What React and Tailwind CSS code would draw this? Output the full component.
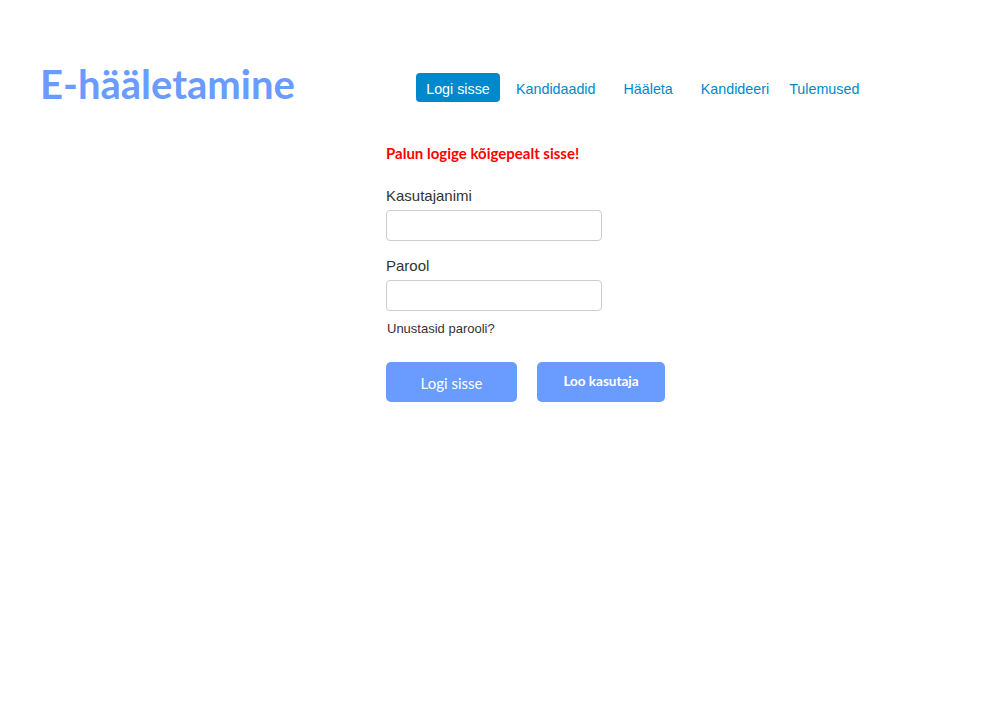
export default function App() {
  return (
    <div className="min-h-[717px] bg-white font-['Liberation_Sans',Arial,sans-serif]">
      {/* Header */}
      <div className="flex items-center pt-[64px]">
        <div className="w-[416px] pl-[40px]">
          <h1 className="font-['Lato',sans-serif] text-[40px] font-bold leading-[40px] text-[#6a9cff]">
            E-hääletamine
          </h1>
        </div>
        <nav className="mt-[6px] flex h-[29px] items-stretch text-[14.3px] leading-[29px]">
          <a className="block h-[29px] w-[84px] rounded-[4px] bg-[#0088cc] pt-[2px] text-center text-white">
            Logi sisse
          </a>
          <a className="ml-[16px] block pt-[2px] text-[#0088cc]">Kandidaadid</a>
          <a className="ml-[28px] block pt-[2px] text-[#0088cc]">Hääleta</a>
          <a className="ml-[28px] block pt-[2px] text-[#0088cc]">Kandideeri</a>
          <a className="ml-[20px] block pt-[2px] text-[#0088cc]">Tulemused</a>
        </nav>
      </div>

      {/* Login form */}
      <div className="pl-[386px] pt-[39px]">
        <p className="font-['Lato',sans-serif] text-[15px] font-bold leading-[20px] text-[#ff0000]">
          Palun logige kõigepealt sisse!
        </p>

        <label className="mt-[23px] block text-[15px] leading-[20px] text-[#333]">Kasutajanimi</label>
        <input className="mt-[4px] block h-[31px] w-[216px] rounded-[4px] border border-[#ccc] px-2" />

        <label className="mt-[15px] block text-[15px] leading-[20px] text-[#333]">Parool</label>
        <input type="password" className="mt-[4px] block h-[31px] w-[216px] rounded-[4px] border border-[#ccc] px-2" />

        <a className="mt-[9px] block pl-[1px] text-[13px] leading-[18px] text-[#333]">Unustasid parooli?</a>

        <div className="mt-[24px] flex gap-[20px]">
          <button className="h-[40px] w-[131px] rounded-[5px] bg-[#6a9cff] pt-[2px] font-['Lato',sans-serif] text-[15px] text-white">
            Logi sisse
          </button>
          <button className="h-[40px] w-[128px] rounded-[5px] bg-[#6a9cff] pb-[2px] font-['Lato',sans-serif] text-[13.5px] font-bold text-white">
            Loo kasutaja
          </button>
        </div>
      </div>
    </div>
  )
}
